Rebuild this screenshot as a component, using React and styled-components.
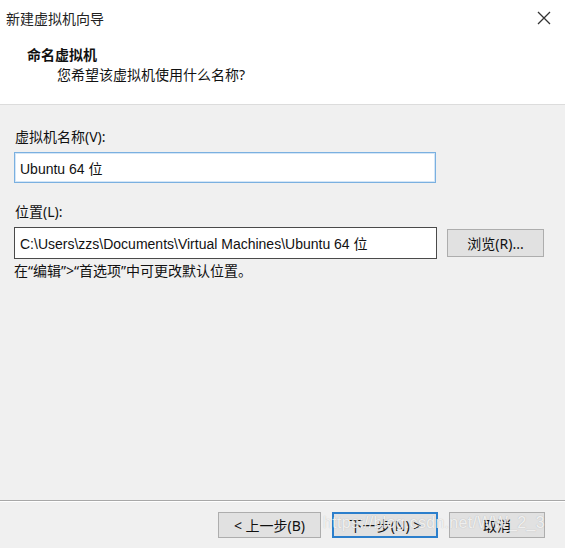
import React from "react";
import styled, { createGlobalStyle } from "styled-components";

const Global = createGlobalStyle`
  html, body { margin: 0; padding: 0; background: #f0f0f0; }
  * { box-sizing: border-box; }
`;

const FONT = `"Noto Sans", "Noto Sans CJK SC", sans-serif`;
const FIELD_FONT = `"Liberation Sans", "Noto Sans CJK SC", sans-serif`;

const Window = styled.div`
  position: relative;
  width: 565px;
  height: 548px;
  background: #f0f0f0;
  font-family: ${FONT};
  font-size: 14px;
  color: #111;
  display: flex;
  flex-direction: column;
  overflow: hidden;
`;

const Header = styled.div`
  height: 105px;
  background: #fff;
  border-bottom: 1px solid #dcdcdc;
  display: flex;
  flex-direction: column;
`;

const TitleBar = styled.div`
  height: 36px;
  display: flex;
  align-items: center;
  justify-content: space-between;
  padding: 0 14px 0 6px;
`;

const Title = styled.span`
  font-size: 14px;
  color: #222;
`;

const CloseIcon = styled.svg`
  width: 14px;
  height: 14px;
  display: block;
`;

const Heading = styled.div`
  margin-top: 9px;
  padding-left: 27px;
  font-weight: bold;
  font-size: 14px;
  line-height: 20px;
`;

const Sub = styled.div`
  padding-left: 57px;
  font-size: 14px;
  line-height: 20px;
`;

const Body = styled.div`
  flex: 1;
  padding: 22px 21px 0 14px;
  display: flex;
  flex-direction: column;
`;

const Label = styled.div`
  padding-left: 1px;
  line-height: 20px;
  margin-bottom: ${(p) => p.$mb}px;
  margin-top: ${(p) => p.$mt || 0}px;
`;

const Row = styled.div`
  display: flex;
  align-items: center;
  gap: 10px;
`;

const Input = styled.div`
  width: ${(p) => p.$w}px;
  height: ${(p) => p.$h || 31}px;
  background: #fff;
  border: 1px solid ${(p) => (p.$focus ? "#7ab0e0" : "#4a4a4a")};
  box-shadow: ${(p) => (p.$focus ? "inset 0 0 0 1px #d4e6f7" : "none")};
  display: flex;
  align-items: center;
  padding-left: 5px;
  font-family: ${FIELD_FONT};
  font-size: 14px;
  white-space: nowrap;
  overflow: hidden;
`;

const Button = styled.div`
  width: ${(p) => p.$w}px;
  height: ${(p) => p.$h || 26}px;
  background: #e1e1e1;
  border: ${(p) => (p.$default ? "2px solid #2c7fcc" : "1px solid #adadad")};
  display: flex;
  align-items: center;
  justify-content: center;
  font-size: 14px;
  color: #111;
`;

const Hint = styled.div`
  margin-top: 2px;
  line-height: 20px;
`;

const Footer = styled.div`
  height: 48px;
  border-top: 1px solid #a8a8a8;
  box-shadow: inset 0 1px 0 #fff;
  display: flex;
  justify-content: flex-end;
  align-items: flex-start;
  padding: 11px 20px 0 0;
  gap: 11px;
`;

const Spacer = styled.div`
  flex: 1;
`;

const Watermark = styled.div`
  position: absolute;
  left: 323px;
  top: 514px;
  font-family: "Liberation Sans", Arial, sans-serif;
  font-size: 16px;
  letter-spacing: 0.3px;
  color: rgba(255, 255, 255, 0.8);
  text-shadow: 0 0 1px rgba(110, 110, 110, 0.45);
  pointer-events: none;
  white-space: nowrap;
`;

export default function App() {
  return (
    <>
      <Global />
      <Window>
        <Header>
          <TitleBar>
            <Title>新建虚拟机向导</Title>
            <CloseIcon viewBox="0 0 14 14">
              <path d="M1 1 L13 13 M13 1 L1 13" stroke="#333" strokeWidth="1.3" fill="none" />
            </CloseIcon>
          </TitleBar>
          <Heading>命名虚拟机</Heading>
          <Sub>您希望该虚拟机使用什么名称?</Sub>
        </Header>
        <Body>
          <Label $mb={5}>虚拟机名称(V):</Label>
          <Row>
            <Input $w={422} $focus>Ubuntu 64 位</Input>
          </Row>
          <Label $mt={19} $mb={5}>位置(L):</Label>
          <Row>
            <Input $w={423} $h={32}>C:\Users\zzs\Documents\Virtual Machines\Ubuntu 64 位</Input>
            <Button $w={97} $h={28}>浏览(R)...</Button>
          </Row>
          <Hint>在“编辑”&gt;“首选项”中可更改默认位置。</Hint>
          <Spacer />
        </Body>
        <Footer>
          <Button $w={103}>&lt; 上一步(B)</Button>
          <Button $w={106} $default>下一步(N) &gt;</Button>
          <Button $w={96}>取消</Button>
        </Footer>
        <Watermark>https://blog.csdn.net/WW_2_3</Watermark>
      </Window>
    </>
  );
}
